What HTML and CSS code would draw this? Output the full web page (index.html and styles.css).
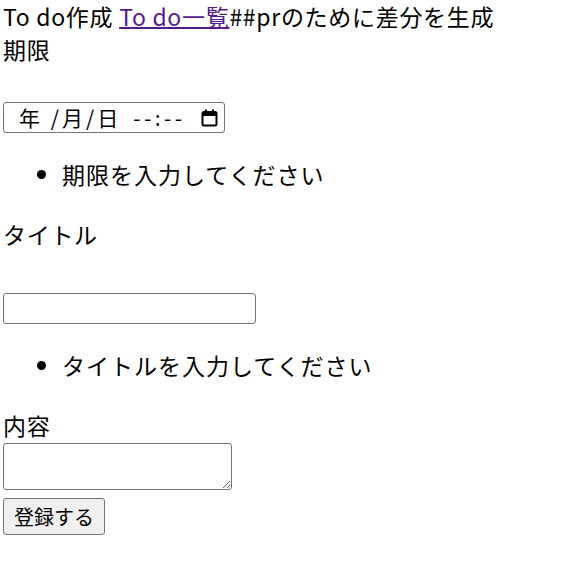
FILE: index.html
```html
<!DOCTYPE html>
<html lang="ja">
<head>
<meta charset="utf-8">
<link rel="stylesheet" href="styles.css">
</head>
<body>
<div class="page">
  <div class="line">To do作成 <a class="link" href="#">To do一覧</a>##prのために差分を生成</div>
  <div class="line">期限</div>
  <div class="date-field">
    <span class="date-text">年 /月/日</span>
    <span class="time-text">--:--</span>
    <svg class="cal" width="17" height="18" viewBox="0 0 17 18"><rect x="1.5" y="3" width="14" height="13.5" rx="1.5" fill="none" stroke="#000" stroke-width="2"/><rect x="1.5" y="3" width="14" height="4" fill="#000"/><rect x="4" y="0.5" width="2" height="3" fill="#000"/><rect x="11" y="0.5" width="2" height="3" fill="#000"/></svg>
  </div>
  <ul class="errors"><li>期限を入力してください</li></ul>
  <div class="line">タイトル</div>
  <input class="text-input" type="text">
  <ul class="errors"><li>タイトルを入力してください</li></ul>
  <div class="line label-tight">内容</div>
  <textarea class="content"></textarea>
  <button class="submit" type="button">登録する</button>
</div>
</body>
</html>
```

FILE: styles.css
```css
html, body {
  margin: 0;
  padding: 0;
  background: #fff;
}
body {
  font-family: "Noto Sans CJK JP", "Noto Sans", sans-serif;
  font-size: 23px;
  letter-spacing: 0.7px;
  line-height: 33px;
  color: #000;
}
.page {
  display: flex;
  flex-direction: column;
  align-items: flex-start;
  padding: 0 3px;
}
.line {
  white-space: nowrap;
}
.errors li {
  white-space: nowrap;
  letter-spacing: 1px;
}
.link {
  color: #551a8b;
  text-decoration: underline;
  text-decoration-thickness: 2px;
}
.date-field {
  margin-top: 36px;
  box-sizing: border-box;
  width: 222px;
  height: 31px;
  border: 1px solid #767676;
  border-radius: 3px;
  display: flex;
  align-items: center;
  font-size: 21px;
  line-height: 1;
  letter-spacing: 0;
  padding-left: 15px;
}
.date-text {
  letter-spacing: 3px;
}
.time-text {
  margin-left: 12px;
  letter-spacing: 3.5px;
}
.cal {
  margin-left: auto;
  margin-right: 6px;
}
.errors {
  margin: 25px 0 27px;
  padding-left: 59px;
  list-style: disc;
}
.text-input {
  margin-top: 42px;
  box-sizing: border-box;
  width: 253px;
  height: 31px;
  border: 1px solid #767676;
  border-radius: 3px;
  padding: 0;
  font: inherit;
}
.label-tight {
  margin-bottom: 1px;
}
.content {
  box-sizing: border-box;
  width: 229px;
  height: 47px;
  border: 1px solid #767676;
  border-radius: 3px;
  margin: 0;
  padding: 2px;
  font: inherit;
}
.submit {
  margin-top: 8px;
  box-sizing: border-box;
  width: 102px;
  height: 37px;
  border: 1px solid #767676;
  border-radius: 3px;
  background: #efefef;
  font-family: inherit;
  font-size: 20px;
  letter-spacing: 0;
  color: #000;
  padding: 0;
}
```
